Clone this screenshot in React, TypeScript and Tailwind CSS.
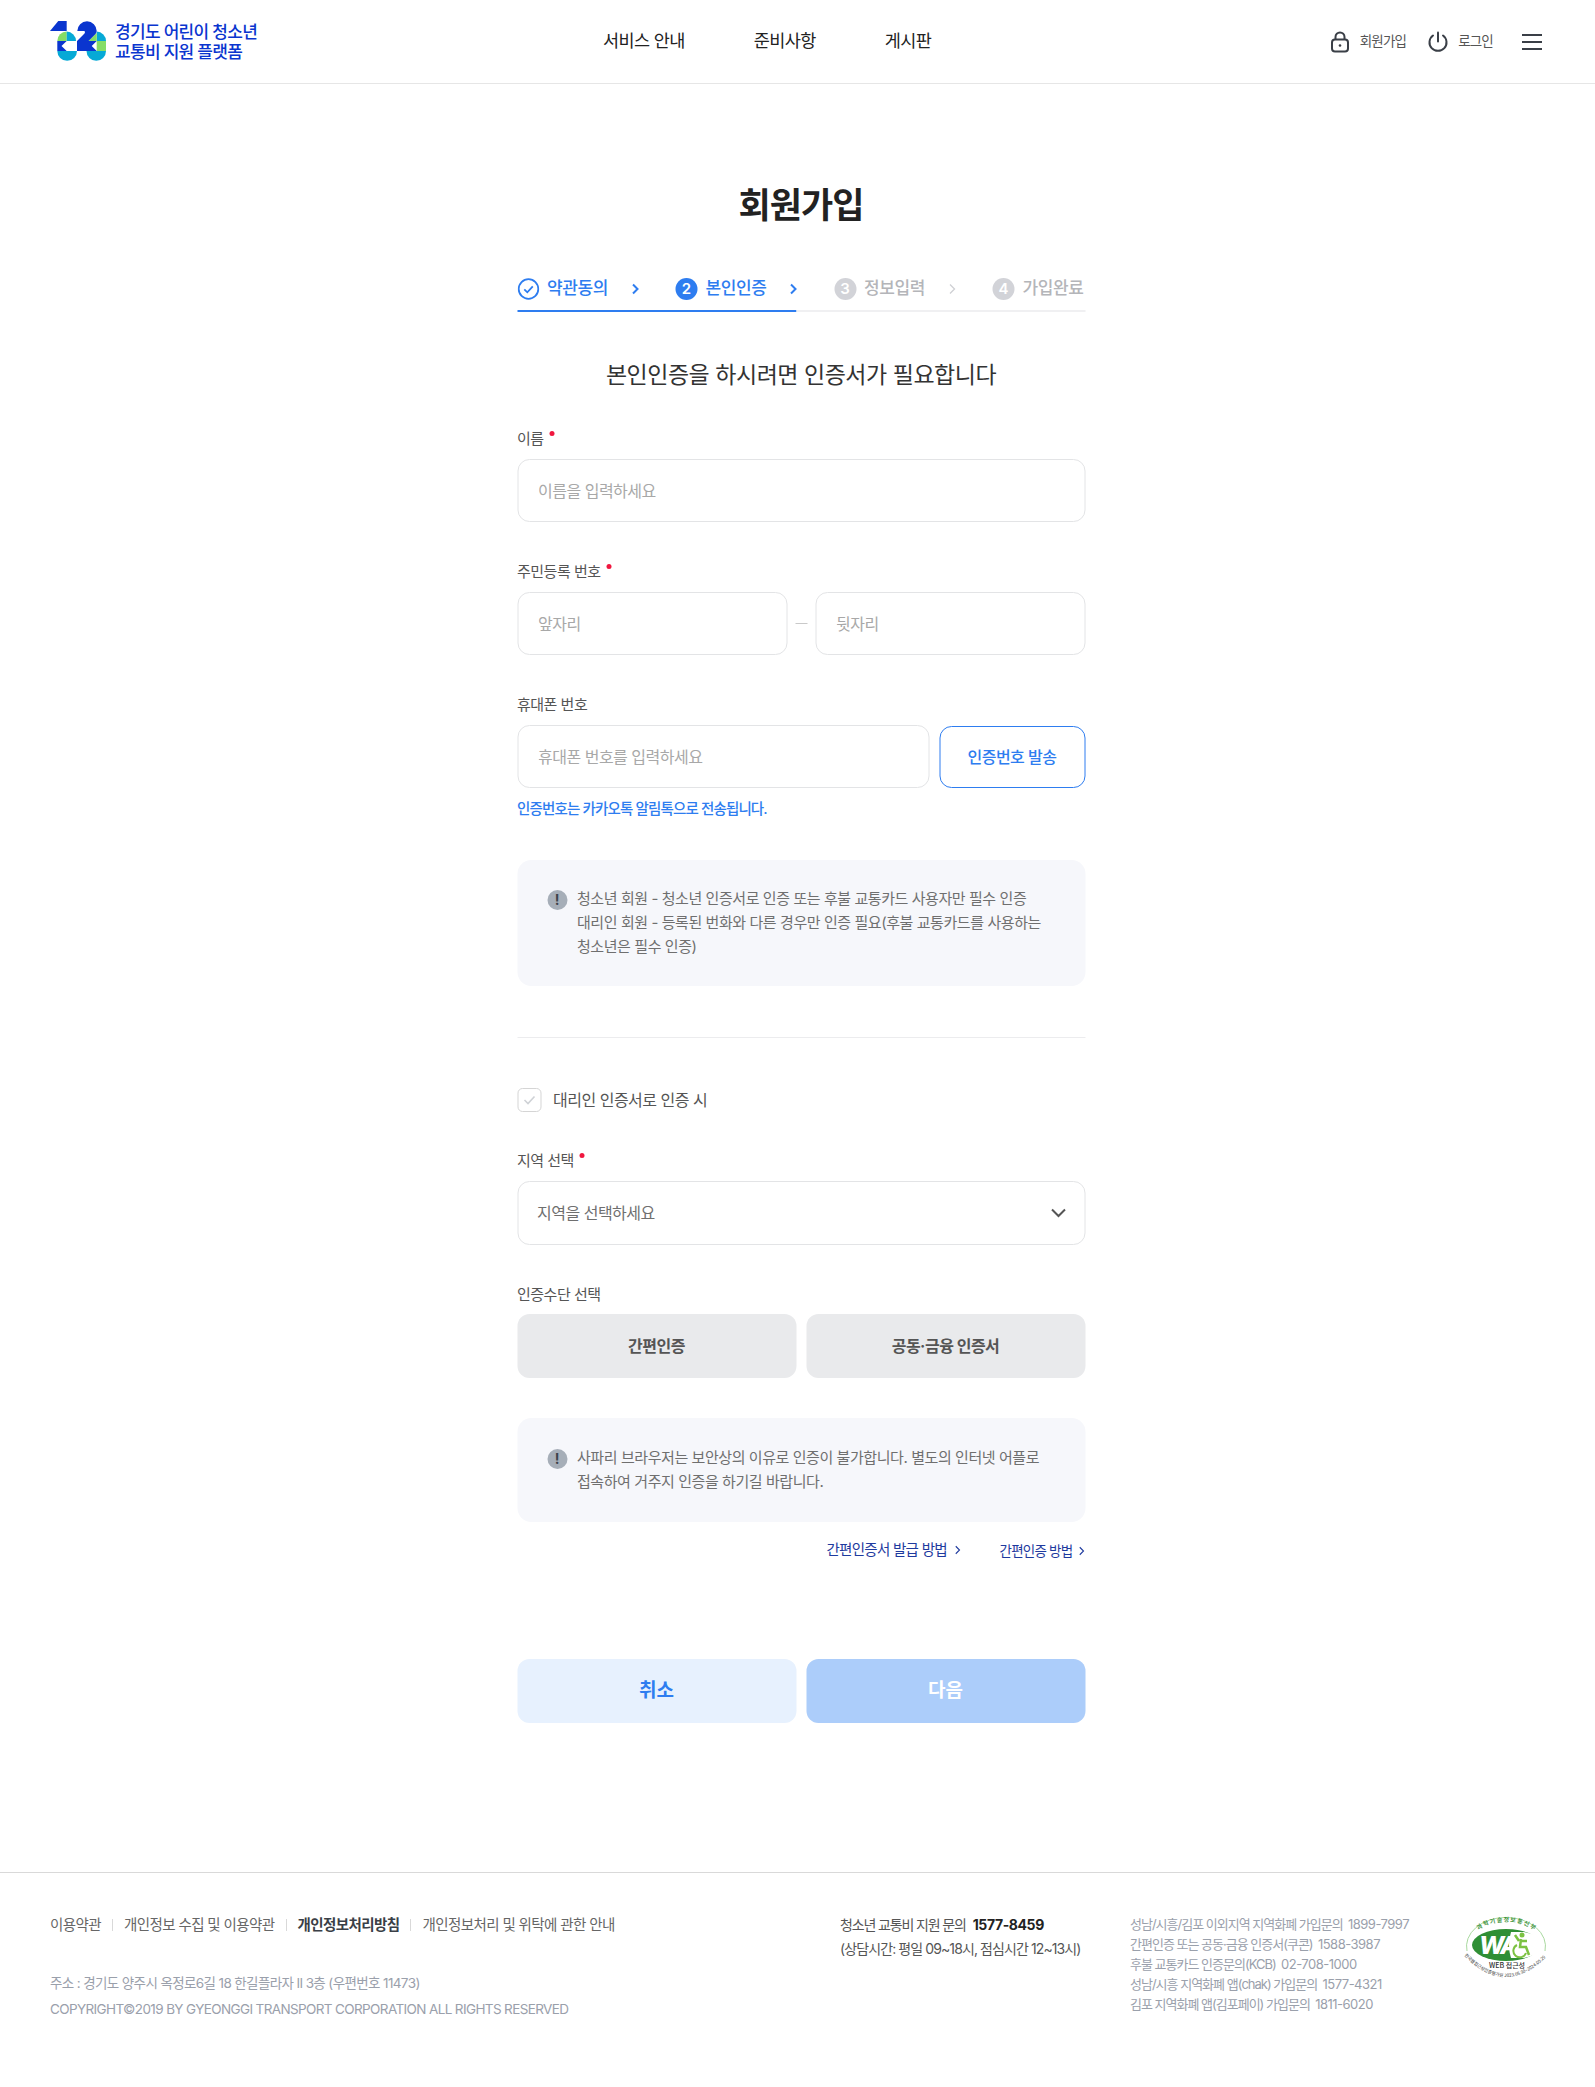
import React from "react";

function Logo() {
  return (
    <svg width="57" height="41" viewBox="0 0 57 41" className="shrink-0">
      <path d="M0 10 L8.300 0 H16.700 V10 Z" fill="#0a35cf" />
      <path d="M7.300 20 A9.400 9.400 0 0 1 16.700 10.600 V20 Z" fill="#85dd66" />
      <path d="M16.700 10.600 A9.400 9.400 0 0 1 26 20 H16.700 Z" fill="#06a9d6" />
      <path d="M7.300 20 H16.700 L11.500 25 L16.700 30 H7.300 Z" fill="#0a35cf" />
      <path d="M7.300 30 H27 A9.850 9.850 0 0 1 7.300 30 Z" fill="#06a9d6" />
      <path d="M46.700 10.600 A9.400 9.400 0 0 1 56 20 H46.700 Z" fill="#06a9d6" />
      <path d="M46.700 20 H56 V30 H46.700 Z" fill="#85dd66" />
      <path d="M46.700 12 V20 H38.500 Z" fill="#85dd66" />
      <path d="M36.500 30 H56 A9.750 9.750 0 0 1 36.500 30 Z" fill="#06a9d6" />
      <path d="M27.300 10 A9.700 9.700 0 0 1 46.700 10 Q46.700 11.500 45.500 13 L38.500 20 H46.700 L41.700 25 L46.700 30 H27 V20 L34.500 12.500 Q35.500 11 34.500 10 Z" fill="#0a35cf" />
    </svg>
  );
}

function Lock() {
  return (
    <svg width="20" height="22" viewBox="0 0 20 22" fill="none" stroke="#3a3f47" strokeWidth="2">
      <rect x="2" y="8.500" width="16" height="12" rx="3" />
      <path d="M5.500 8.500V6a4.500 4.500 0 0 1 9 0v2.500" />
      <circle cx="10" cy="14.500" r="1.300" fill="#3a3f47" stroke="none" />
    </svg>
  );
}

function Power() {
  return (
    <svg width="20" height="22" viewBox="0 0 20 22" fill="none" stroke="#3a3f47" strokeWidth="2" strokeLinecap="round">
      <path d="M10 1.500v9" />
      <path d="M5 4.500a8.500 8.500 0 1 0 10 0" />
    </svg>
  );
}

function Chevron({ color, size = 12, w = 2 }: { color: string; size?: number; w?: number }) {
  return (
    <svg width={size * 0.67} height={size} viewBox="0 0 8 12" fill="none" stroke={color} strokeWidth={w}>
      <path d="M1.500 1.500 6 6l-4.500 4.500" />
    </svg>
  );
}

function Step({ n, label, state, wide = true }: { n: string; label: string; state: "done" | "active" | "off"; wide?: boolean }) {
  const blue = state !== "off";
  return (
    <div className={wide ? "flex w-[158.500px] shrink-0 items-center" : "flex items-center"}>
      {state === "done" ? (
        <svg width="22" height="22" viewBox="0 0 22 22" fill="none" stroke="#2e7df0" strokeWidth="1.800" className="shrink-0">
          <circle cx="11" cy="11" r="9.800" />
          <path d="M6.800 11.300l3 3 5.500-6" />
        </svg>
      ) : (
        <span className={`flex h-[22px] w-[22px] shrink-0 items-center justify-center rounded-full text-[15px] font-semibold text-white ${blue ? "bg-[#2e7df0]" : "bg-[#d2d3d8]"}`}>{n}</span>
      )}
      <span className={`ml-[8px] w-[62px] whitespace-nowrap text-[17px] font-medium tracking-[-0.4px] ${blue ? "text-[#2e7df0]" : "text-[#b4b5b9]"}`}>{label}</span>
      {wide && (
        <span className="ml-[22px] flex">
          {blue ? <Chevron color="#2e7df0" /> : <Chevron color="#cfd0d4" w={1.300} />}
        </span>
      )}
    </div>
  );
}

function Label({ text, required = false }: { text: string; required?: boolean }) {
  return (
    <div className="flex h-[22px] items-center text-[15px] leading-[22px] tracking-[-0.5px] text-[#555]">
      {text}
      {required && <span className="mb-[11px] ml-[6px] h-[5px] w-[5px] rounded-full bg-[#f0173f]" />}
    </div>
  );
}

function Input({ placeholder, className = "" }: { placeholder: string; className?: string }) {
  return (
    <input
      placeholder={placeholder}
      className={`h-[63px] min-w-0 rounded-[12px] border border-[#e3e4e6] bg-white px-[20px] text-[16px] tracking-[-0.5px] text-[#333] outline-none placeholder:text-[#a8a8a8] ${className}`}
    />
  );
}

function Info({ lines, className = "" }: { lines: string[]; className?: string }) {
  return (
    <div className={`flex rounded-[14px] bg-[#f6f7fb] pl-[30px] pr-[30px] ${className}`}>
      <span className="mt-[3px] flex h-[20px] w-[20px] shrink-0 items-center justify-center rounded-full bg-[#a6aeb8] text-[14px] font-bold leading-none text-[#3d424a]">!</span>
      <div className="ml-[10px] text-[15px] leading-[24px] tracking-[-0.43px] text-[#6f6f6f]">
        {lines.map((l) => (
          <div key={l} className="whitespace-nowrap">{l}</div>
        ))}
      </div>
    </div>
  );
}

function Sep() {
  return <span className="mx-[11px] h-[12px] w-px bg-[#d9d9d9]" />;
}

function Badge() {
  return (
    <svg width="92" height="72" viewBox="0 0 92 72" className="shrink-0">
      <path d="M7 38 A39.500 29 0 1 1 85 38" fill="none" stroke="#a9d99f" strokeWidth="1" />
      <ellipse cx="46" cy="32" rx="34" ry="16" fill="#2f8f35" />
      <path d="M51 19 H64 A30 14 0 0 1 64 45 H51 Q47 32 51 19 Z" fill="#fff" />
      <text x="19" y="41" fontFamily="Inter, sans-serif" fontSize="24" fontWeight="800" fontStyle="italic" fill="#fff" letterSpacing="-2.500">WA</text>
      <circle cx="62" cy="22" r="2.500" fill="#7cc242" />
      <path d="M61 26 l-1 8 h6 l3 8 M55 22 l4 6 M61 28 l6 0" stroke="#7cc242" strokeWidth="2.500" fill="none" />
      <path d="M57 32 a6.500 6.500 0 1 0 9 8" stroke="#7cc242" strokeWidth="2" fill="none" />
      <path id="bdgTop" d="M13 24 A34 20 0 0 1 79 24" fill="none" />
      <text fontSize="6" fontWeight="700" fill="#3f9440" fontFamily="'Noto Sans CJK KR', sans-serif" letterSpacing="1.100">
        <textPath href="#bdgTop" startOffset="9">과학기술정보통신부</textPath>
      </text>
      <text x="47" y="55" textAnchor="middle" fontSize="7" fontWeight="500" fill="#333" fontFamily="'Noto Sans CJK KR', sans-serif">WEB 접근성</text>
      <path id="bdgBot" d="M0 38 Q46 90 92 38" fill="none" />
      <text fontSize="4.500" fill="#333" fontFamily="'Noto Sans CJK KR', sans-serif">
        <textPath href="#bdgBot" startOffset="6">한국웹접근성인증평가원 2023.05.30~2024.05.29</textPath>
      </text>
    </svg>
  );
}

export default function App() {
  return (
    <div className="min-h-[2087px] bg-white font-['Inter','Noto_Sans_CJK_KR',sans-serif] text-[#222]">
      <header className="flex h-[84px] items-center border-b border-[#e6e6e6] pl-[50px] pr-[53px]">
        <div className="flex w-[553px] items-center">
          <Logo />
          <div className="ml-[8px] text-[17px] font-medium leading-[20px] tracking-[-0.7px] text-[#0a35cf]">
            <div>경기도 어린이 청소년</div>
            <div>교통비 지원 플랫폼</div>
          </div>
        </div>
        <nav className="flex gap-[69px] text-[17.500px] tracking-[-0.6px] text-[#222]">
          <span>서비스 안내</span>
          <span>준비사항</span>
          <span>게시판</span>
        </nav>
        <div className="ml-auto flex items-center text-[13.500px] tracking-[-0.8px] text-[#555]">
          <Lock />
          <span className="ml-[10px]">회원가입</span>
          <span className="ml-[22px] flex"><Power /></span>
          <span className="ml-[10px]">로그인</span>
          <span className="ml-[29px] flex h-[16px] w-[20px] flex-col justify-between">
            <span className="h-[2px] bg-[#3a3f47]" />
            <span className="h-[2px] bg-[#3a3f47]" />
            <span className="h-[2px] bg-[#3a3f47]" />
          </span>
        </div>
      </header>

      <main className="mx-auto w-[568px] translate-x-[3.500px]">
        <h1 className="mt-[97px] text-center text-[35px] font-bold leading-[48px] tracking-[-1px] text-[#222]">회원가입</h1>

        <div className="mt-[47px] flex h-[34px] items-start">
          <Step n="1" label="약관동의" state="done" />
          <Step n="2" label="본인인증" state="active" />
          <Step n="3" label="정보입력" state="off" />
          <Step n="4" label="가입완료" state="off" wide={false} />
        </div>
        <div className="flex h-[2px]">
          <div className="w-[279px] bg-[#2e7df0]" />
          <div className="flex-1 bg-[#f0f0f2]" />
        </div>

        <p className="mt-[46px] text-center text-[23px] leading-[34px] tracking-[-0.48px] text-[#333]">본인인증을 하시려면 인증서가 필요합니다</p>

        <div className="mt-[36px]"><Label text="이름" required /></div>
        <div className="mt-[9px] flex"><Input placeholder="이름을 입력하세요" className="w-full" /></div>

        <div className="mt-[39px]"><Label text="주민등록 번호" required /></div>
        <div className="mt-[9px] flex items-center">
          <Input placeholder="앞자리" className="w-[270px]" />
          <span className="flex w-[28px] justify-center"><span className="h-px w-[12px] bg-[#c9c9c9]" /></span>
          <Input placeholder="뒷자리" className="w-[270px]" />
        </div>

        <div className="mt-[39px]"><Label text="휴대폰 번호" /></div>
        <div className="mt-[9px] flex gap-[10px]">
          <Input placeholder="휴대폰 번호를 입력하세요" className="w-[412px]" />
          <button className="mt-px h-[62px] w-[146px] rounded-[12px] border border-[#2e7df0] bg-white text-[16px] font-medium tracking-[-0.5px] text-[#2e7df0]">인증번호 발송</button>
        </div>
        <p className="mt-[11px] text-[14.500px] font-medium leading-[20px] tracking-[-0.85px] text-[#2e7df0]">인증번호는 카카오톡 알림톡으로 전송됩니다.</p>

        <Info
          className="mt-[41px] py-[27px]"
          lines={[
            "청소년 회원 - 청소년 인증서로 인증 또는 후불 교통카드 사용자만 필수 인증",
            "대리인 회원 - 등록된 번화와 다른 경우만 인증 필요(후불 교통카드를 사용하는",
            "청소년은 필수 인증)",
          ]}
        />

        <div className="mt-[51px] h-px bg-[#ececee]" />

        <label className="mt-[50px] flex h-[24px] items-center">
          <span className="flex h-[24px] w-[24px] items-center justify-center rounded-[5px] border border-[#d5d5d5]">
            <svg width="14" height="12" viewBox="0 0 14 12" fill="none" stroke="#cfd2d6" strokeWidth="1.600"><path d="M2 6l3.500 3.500L12 2.500" /></svg>
          </span>
          <span className="ml-[12px] text-[16px] tracking-[-0.5px] text-[#555]">대리인 인증서로 인증 시</span>
        </label>

        <div className="mt-[38px]"><Label text="지역 선택" required /></div>
        <div className="mt-[9px] flex h-[64px] items-center justify-between rounded-[12px] border border-[#e3e4e6] pl-[19px] pr-[18px] text-[16px] tracking-[-0.5px] text-[#6f6f6f]">
          <span>지역을 선택하세요</span>
          <svg width="16" height="10" viewBox="0 0 16 10" fill="none" stroke="#555" strokeWidth="2"><path d="M1.500 1.500 8 8l6.500-6.500" /></svg>
        </div>

        <div className="mt-[39px]"><Label text="인증수단 선택" /></div>
        <div className="mt-[8px] flex gap-[10px]">
          <button className="h-[64px] flex-1 rounded-[12px] bg-[#e9eaec] text-[16px] font-bold tracking-[-0.5px] text-[#555]">간편인증</button>
          <button className="h-[64px] flex-1 rounded-[12px] bg-[#e9eaec] text-[16px] font-bold tracking-[-0.5px] text-[#555]">공동·금융 인증서</button>
        </div>

        <Info
          className="mt-[40px] py-[28px]"
          lines={[
            "사파리 브라우저는 보안상의 이유로 인증이 불가합니다. 별도의 인터넷 어플로",
            "접속하여 거주지 인증을 하기길 바랍니다.",
          ]}
        />

        <div className="mt-[17px] flex items-center justify-end text-[#1e3a9e]">
          <span className="text-[14.500px] tracking-[-0.7px]">간편인증서 발급 방법</span>
          <span className="ml-[8px] flex"><Chevron color="#1e3a9e" size={10} w={1.300} /></span>
          <span className="ml-[38px] mt-[2px] text-[13.500px] tracking-[-0.8px]">간편인증 방법</span>
          <span className="ml-[6px] mt-[2px] flex"><Chevron color="#1e3a9e" size={10} w={1.300} /></span>
        </div>

        <div className="mt-[98px] flex gap-[10px]">
          <button className="h-[64px] flex-1 rounded-[12px] bg-[#e7f1fe] text-[19px] font-bold text-[#2e7df0]">취소</button>
          <button className="h-[64px] flex-1 rounded-[12px] bg-[#accdfa] text-[19px] font-bold text-white">다음</button>
        </div>
      </main>

      <footer className="mt-[149px] flex h-[214px] border-t border-[#d9d9d9] pl-[50px] pr-[43px] pt-[40px]">
        <div className="w-[790px]">
          <div className="flex h-[24px] items-center text-[14.500px] tracking-[-0.6px] text-[#666]">
            <span>이용약관</span><Sep />
            <span>개인정보 수집 및 이용약관</span><Sep />
            <span className="font-bold text-[#3a3f47]">개인정보처리방침</span><Sep />
            <span>개인정보처리 및 위탁에 관한 안내</span>
          </div>
          <p className="mt-[35px] text-[13.500px] leading-[22px] tracking-[-0.62px] text-[#9aa0ab]">주소 : 경기도 양주시 옥정로6길 18 한길플라자 II 3층 (우편번호 11473)</p>
          <p className="mt-[4px] text-[13.500px] leading-[22px] tracking-[-0.62px] text-[#9aa0ab]">COPYRIGHT©2019 BY GYEONGGI TRANSPORT CORPORATION ALL RIGHTS RESERVED</p>
        </div>
        <div className="w-[290px] text-[14px] leading-[24px] tracking-[-0.9px] text-[#555]">
          <div><span className="tracking-[-1.15px]">청소년 교통비 지원 문의</span> <b className="ml-[4px] text-[14px] font-bold tracking-[-0.4px] text-[#222]">1577-8459</b></div>
          <div>(상담시간: 평일 09~18시, 점심시간 12~13시)</div>
        </div>
        <div className="mt-px text-[13px] leading-[20px] tracking-[-1px] text-[#9aa0ab]">
          <div>성남/시흥/김포 이외지역 지역화폐 가입문의 &nbsp;<span className="tracking-[-0.5px]">1899-7997</span></div>
          <div>간편인증 또는 공동·금융 인증서(쿠콘) &nbsp;<span className="tracking-[-0.5px]">1588-3987</span></div>
          <div>후불 교통카드 인증문의(KCB) &nbsp;<span className="tracking-[-0.5px]">02-708-1000</span></div>
          <div>성남/시흥 지역화폐 앱(chak) 가입문의 &nbsp;<span className="tracking-[-0.5px]">1577-4321</span></div>
          <div>김포 지역화폐 앱(김포페이) 가입문의 &nbsp;<span className="tracking-[-0.5px]">1811-6020</span></div>
        </div>
        <div className="ml-auto"><Badge /></div>
      </footer>
    </div>
  );
}
